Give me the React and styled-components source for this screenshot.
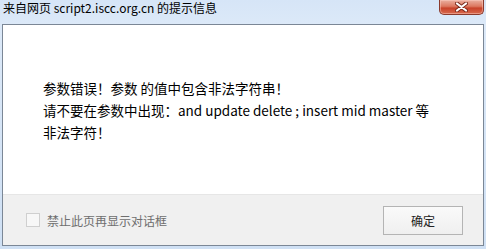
import React from "react";
import styled, { createGlobalStyle } from "styled-components";

const Global = createGlobalStyle`
  html, body { margin: 0; padding: 0; }
  body { width: 486px; height: 249px; overflow: hidden; font-family: "Noto Sans CJK SC", "Noto Sans", sans-serif; }
`;

const Window = styled.div`
  width: 486px;
  height: 249px;
  box-sizing: border-box;
  background: linear-gradient(180deg, #d6e5f7 0%, #dce9f8 10%, #cfe0f4 100%);
  display: flex;
  flex-direction: column;
`;

const TitleBar = styled.div`
  height: 24px;
  display: flex;
  align-items: flex-start;
  padding-left: 3px;
  flex-shrink: 0;
`;

const Title = styled.div`
  font-size: 12px;
  line-height: 14px;
  margin-top: 1px;
  color: #000;
  white-space: nowrap;
  flex: 1;
`;

const CloseButton = styled.div`
  width: 45px;
  height: 15px;
  margin-right: 2px;
  box-sizing: border-box;
  border: 1px solid #8a3a2c;
  border-top: none;
  border-radius: 0 0 5px 5px;
  background: linear-gradient(180deg, #eab0a0 0%, #dc7860 45%, #c8432a 58%, #d86a4f 100%);
  box-shadow: inset 0 0 0 1px rgba(255, 210, 200, 0.45);
  display: flex;
  align-items: center;
  justify-content: center;
`;

const Panel = styled.div`
  margin: 0 2px;
  height: 222px;
  box-sizing: border-box;
  border: 1px solid #7b8796;
  display: flex;
  flex-direction: column;
  background: #fff;
`;

const Content = styled.div`
  flex: 1;
  padding: 52px 0 0 40px;
  font-size: 13.5px;
  line-height: 22px;
  color: #000;
`;

const Line = styled.div`
  white-space: nowrap;
`;

const Footer = styled.div`
  height: 50px;
  border-top: 1px solid #e6e6e6;
  background: #f0f0f0;
  display: flex;
  align-items: center;
  padding: 0 20px 0 23px;
  flex-shrink: 0;
`;

const CheckLabel = styled.label`
  display: flex;
  align-items: center;
  gap: 7px;
  font-size: 12px;
  color: #6e6e6e;
  flex: 1;
`;

const Box = styled.span`
  width: 12px;
  height: 12px;
  border: 1px solid #cfcfcf;
  background: #f7f7f7;
  display: inline-block;
`;

const Button = styled.button`
  width: 80px;
  height: 29px;
  margin-top: 1px;
  border: 1px solid #b4b4b4;
  border-radius: 0;
  background: linear-gradient(180deg, #fafafa 0%, #efefef 100%);
  font-family: "Noto Sans CJK SC", sans-serif;
  font-size: 12px;
  color: #222;
  padding: 0;
`;

function CloseX() {
  return (
    <svg width="13" height="10" viewBox="0 0 13 10">
      <path d="M2 1.5 L11 8.5 M11 1.5 L2 8.5" stroke="#7a2a1c" strokeWidth="4" strokeLinecap="round" />
      <path d="M2 1.5 L11 8.5 M11 1.5 L2 8.5" stroke="#ffffff" strokeWidth="2.2" strokeLinecap="round" />
    </svg>
  );
}

export default function App() {
  return (
    <>
      <Global />
      <Window>
        <TitleBar>
          <Title>来自网页 script2.iscc.org.cn 的提示信息</Title>
          <CloseButton>
            <CloseX />
          </CloseButton>
        </TitleBar>
        <Panel>
          <Content>
            <Line>参数错误！参数 的值中包含非法字符串！</Line>
            <Line>请不要在参数中出现：and update delete ; insert mid master 等</Line>
            <Line>非法字符！</Line>
          </Content>
          <Footer>
            <CheckLabel>
              <Box />
              禁止此页再显示对话框
            </CheckLabel>
            <Button>确定</Button>
          </Footer>
        </Panel>
      </Window>
    </>
  );
}
